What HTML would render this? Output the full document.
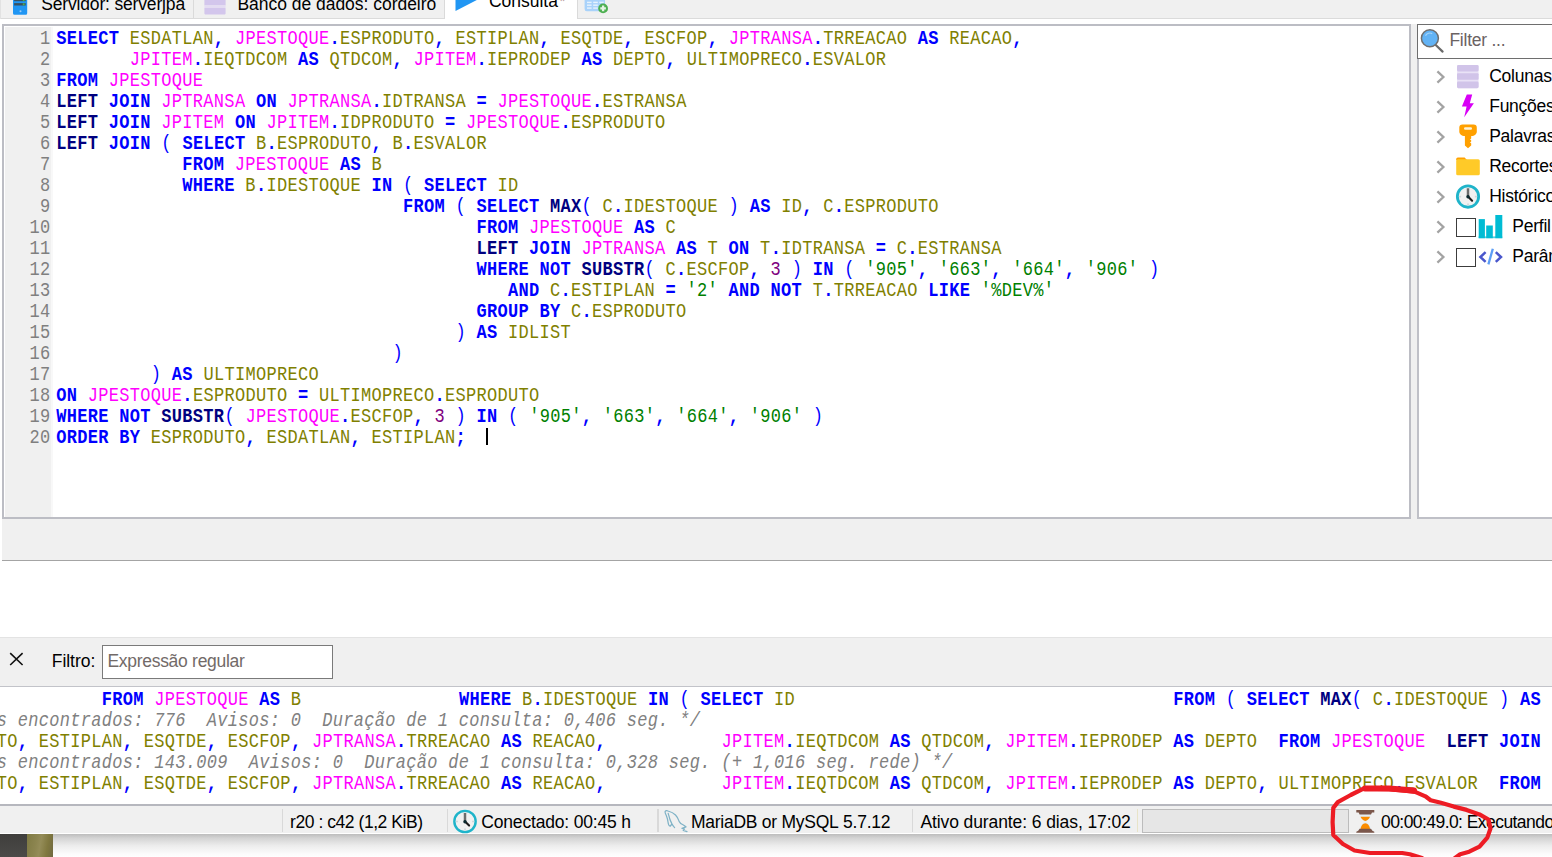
<!DOCTYPE html>
<html lang="pt-BR"><head><meta charset="utf-8"><title>HeidiSQL - Consulta</title>
<style>
html,body{margin:0;padding:0}
body{width:1552px;height:857px;position:relative;overflow:hidden;background:#fff;font-family:"Liberation Sans",sans-serif;font-kerning:none}
.a{position:absolute}
.u{position:absolute;white-space:pre;line-height:22px;font-family:"Liberation Sans",sans-serif}
.code{position:absolute;white-space:pre;font-family:"Liberation Mono",monospace;font-size:17.0px;letter-spacing:0.3008px;line-height:21px;color:#808000}
.code div{height:21px;transform-origin:0 15px;transform:scaleY(1.16)}
.k{color:#0000ff}.f{color:#000080}.t{color:#ff00ff}.i{color:#808000}.y{color:#0000ff}.s{color:#008000}.n{color:#800080}
.m{color:#808080;font-style:italic}
.ln{color:#7f7f7f;text-align:right}
svg{position:absolute;overflow:visible}
</style></head><body>

<div class="a" style="left:0;top:0;width:1552px;height:18px;background:#f0f0f0"></div>
<div class="a" style="left:0;top:18px;width:1552px;height:1.4px;background:#dbdbdb"></div>
<div class="a" style="left:0;top:0;width:1px;height:19px;background:#e2e2e2"></div>
<div class="a" style="left:193px;top:0;width:1px;height:18px;background:#dadada"></div>
<div class="a" style="left:443.6px;top:0;width:134.8px;height:19px;background:#dadada"></div>
<div class="a" style="left:444.8px;top:0;width:132.3px;height:20px;background:#fff"></div>
<svg style="left:12px;top:0" width="17" height="16" viewBox="12 0 17 16"><path d="M13 -4H27.2V13.2a1.5 1.5 0 0 1-1.5 1.5H14.5a1.5 1.5 0 0 1-1.5-1.5Z" fill="#2196f3"/><rect x="14.1" y="-2" width="11.6" height="3.2" fill="#3a5160"/><rect x="14.1" y="3.1" width="11.6" height="2.4" fill="#3a5160"/><rect x="22.8" y="-1" width="1.8" height="2" fill="#4caf50"/><rect x="22.8" y="3.3" width="1.8" height="2" fill="#4caf50"/><circle cx="20.5" cy="11.2" r="1" fill="#9ccdf8"/></svg>
<span class="u" style="left:41.2px;top:-6.67px;font-size:17.5px;letter-spacing:-0.163px;color:#000;">Servidor: serverjpa</span>
<svg style="left:204px;top:0" width="22" height="15" viewBox="204 0 22 15"><rect x="204.4" y="-3" width="21.2" height="8.4" fill="#d3c6ec"/><rect x="204.4" y="7.6" width="21.2" height="6.8" rx="0.8" fill="#d3c6ec"/><rect x="204.4" y="5.4" width="21.2" height="2.2" fill="#e4dcf3"/></svg>
<span class="u" style="left:237.4px;top:-6.87px;font-size:17.5px;letter-spacing:-0.025px;color:#000;">Banco de dados: cordeiro</span>
<svg style="left:455px;top:0" width="24" height="12" viewBox="455 0 24 12"><path d="M455.5 -12V10.9L478 -0.6Z" fill="#2196f3"/></svg>
<span class="u" style="left:488.9px;top:-10.07px;font-size:17.5px;letter-spacing:-0.003px;color:#000;">Consulta</span>
<span class="u" style="left:559.5px;top:-10.20px;font-size:15px;letter-spacing:0.000px;color:#b89a9a;">*</span>
<svg style="left:584px;top:0" width="26" height="15" viewBox="584 0 26 15"><rect x="584.6" y="-4" width="20.4" height="15.3" rx="2.2" fill="#a9d2fa"/><g fill="#e6f2fd"><rect x="587" y="1.7" width="4.6" height="1.4"/><rect x="593.2" y="1.7" width="4.6" height="1.4"/><rect x="599.3" y="1.7" width="4.4" height="1.4"/><rect x="587" y="4.5" width="4.6" height="1.4"/><rect x="593.2" y="4.5" width="4.6" height="1.4"/><rect x="587" y="7.4" width="4.6" height="1.4"/><rect x="593.2" y="7.4" width="4.6" height="1.4"/></g><circle cx="603.1" cy="8.4" r="4.9" fill="#4caf50"/><path d="M600.3 8.4H605.9M603.1 5.6V11.2" stroke="#e4f3e4" stroke-width="2.3"/></svg>
<div class="a" style="left:2px;top:24px;width:1409px;height:495px;box-sizing:border-box;border:2px solid #bcbdc4;background:#fff"></div>
<div class="a" style="left:5px;top:27px;width:45.5px;height:489.5px;background:#f0f0f0"></div>
<div class="a" style="left:50.5px;top:27px;width:2.5px;height:489.5px;background:#f8f8f8"></div>
<div class="code ln" style="left:5px;top:29.00px;width:45.6px"><div>1</div><div>2</div><div>3</div><div>4</div><div>5</div><div>6</div><div>7</div><div>8</div><div>9</div><div>10</div><div>11</div><div>12</div><div>13</div><div>14</div><div>15</div><div>16</div><div>17</div><div>18</div><div>19</div><div>20</div></div>
<div class="code" style="left:56.3px;top:29.00px"><div><b class="k">SELECT</b> <span class="i">ESDATLAN</span><b class="y">,</b> <span class="t">JPESTOQUE</span><b class="y">.</b><span class="i">ESPRODUTO</span><b class="y">,</b> <span class="i">ESTIPLAN</span><b class="y">,</b> <span class="i">ESQTDE</span><b class="y">,</b> <span class="i">ESCFOP</span><b class="y">,</b> <span class="t">JPTRANSA</span><b class="y">.</b><span class="i">TRREACAO</span> <b class="k">AS</b> <span class="i">REACAO</span><b class="y">,</b></div><div>       <span class="t">JPITEM</span><b class="y">.</b><span class="i">IEQTDCOM</span> <b class="k">AS</b> <span class="i">QTDCOM</span><b class="y">,</b> <span class="t">JPITEM</span><b class="y">.</b><span class="i">IEPRODEP</span> <b class="k">AS</b> <span class="i">DEPTO</span><b class="y">,</b> <span class="i">ULTIMOPRECO</span><b class="y">.</b><span class="i">ESVALOR</span></div><div><b class="k">FROM</b> <span class="t">JPESTOQUE</span></div><div><b class="f">LEFT</b> <b class="k">JOIN</b> <span class="t">JPTRANSA</span> <b class="k">ON</b> <span class="t">JPTRANSA</span><b class="y">.</b><span class="i">IDTRANSA</span> <b class="y">=</b> <span class="t">JPESTOQUE</span><b class="y">.</b><span class="i">ESTRANSA</span></div><div><b class="f">LEFT</b> <b class="k">JOIN</b> <span class="t">JPITEM</span> <b class="k">ON</b> <span class="t">JPITEM</span><b class="y">.</b><span class="i">IDPRODUTO</span> <b class="y">=</b> <span class="t">JPESTOQUE</span><b class="y">.</b><span class="i">ESPRODUTO</span></div><div><b class="f">LEFT</b> <b class="k">JOIN</b> <span class="y">(</span> <b class="k">SELECT</b> <span class="i">B</span><b class="y">.</b><span class="i">ESPRODUTO</span><b class="y">,</b> <span class="i">B</span><b class="y">.</b><span class="i">ESVALOR</span></div><div>            <b class="k">FROM</b> <span class="t">JPESTOQUE</span> <b class="k">AS</b> <span class="i">B</span></div><div>            <b class="k">WHERE</b> <span class="i">B</span><b class="y">.</b><span class="i">IDESTOQUE</span> <b class="k">IN</b> <span class="y">(</span> <b class="k">SELECT</b> <span class="i">ID</span></div><div>                                 <b class="k">FROM</b> <span class="y">(</span> <b class="k">SELECT</b> <b class="f">MAX</b><span class="y">(</span> <span class="i">C</span><b class="y">.</b><span class="i">IDESTOQUE</span> <span class="y">)</span> <b class="k">AS</b> <span class="i">ID</span><b class="y">,</b> <span class="i">C</span><b class="y">.</b><span class="i">ESPRODUTO</span></div><div>                                        <b class="k">FROM</b> <span class="t">JPESTOQUE</span> <b class="k">AS</b> <span class="i">C</span></div><div>                                        <b class="f">LEFT</b> <b class="k">JOIN</b> <span class="t">JPTRANSA</span> <b class="k">AS</b> <span class="i">T</span> <b class="k">ON</b> <span class="i">T</span><b class="y">.</b><span class="i">IDTRANSA</span> <b class="y">=</b> <span class="i">C</span><b class="y">.</b><span class="i">ESTRANSA</span></div><div>                                        <b class="k">WHERE</b> <b class="k">NOT</b> <b class="f">SUBSTR</b><span class="y">(</span> <span class="i">C</span><b class="y">.</b><span class="i">ESCFOP</span><b class="y">,</b> <span class="n">3</span> <span class="y">)</span> <b class="k">IN</b> <span class="y">(</span> <span class="s">'905'</span><b class="y">,</b> <span class="s">'663'</span><b class="y">,</b> <span class="s">'664'</span><b class="y">,</b> <span class="s">'906'</span> <span class="y">)</span></div><div>                                           <b class="k">AND</b> <span class="i">C</span><b class="y">.</b><span class="i">ESTIPLAN</span> <b class="y">=</b> <span class="s">'2'</span> <b class="k">AND</b> <b class="k">NOT</b> <span class="i">T</span><b class="y">.</b><span class="i">TRREACAO</span> <b class="k">LIKE</b> <span class="s">'%DEV%'</span></div><div>                                        <b class="k">GROUP</b> <b class="k">BY</b> <span class="i">C</span><b class="y">.</b><span class="i">ESPRODUTO</span></div><div>                                      <span class="y">)</span> <b class="k">AS</b> <span class="i">IDLIST</span></div><div>                                <span class="y">)</span></div><div>         <span class="y">)</span> <b class="k">AS</b> <span class="i">ULTIMOPRECO</span></div><div><b class="k">ON</b> <span class="t">JPESTOQUE</span><b class="y">.</b><span class="i">ESPRODUTO</span> <b class="y">=</b> <span class="i">ULTIMOPRECO</span><b class="y">.</b><span class="i">ESPRODUTO</span></div><div><b class="k">WHERE</b> <b class="k">NOT</b> <b class="f">SUBSTR</b><span class="y">(</span> <span class="t">JPESTOQUE</span><b class="y">.</b><span class="i">ESCFOP</span><b class="y">,</b> <span class="n">3</span> <span class="y">)</span> <b class="k">IN</b> <span class="y">(</span> <span class="s">'905'</span><b class="y">,</b> <span class="s">'663'</span><b class="y">,</b> <span class="s">'664'</span><b class="y">,</b> <span class="s">'906'</span> <span class="y">)</span></div><div><b class="k">ORDER</b> <b class="k">BY</b> <span class="i">ESPRODUTO</span><b class="y">,</b> <span class="i">ESDATLAN</span><b class="y">,</b> <span class="i">ESTIPLAN</span><b class="y">;</b>  </div></div>
<div class="a" style="left:486px;top:427.5px;width:2.2px;height:17px;background:#000"></div>
<div class="a" style="left:1411px;top:24px;width:6.5px;height:495px;background:#f0f0f0"></div>
<div class="a" style="left:1417px;top:24px;width:140px;height:495px;box-sizing:border-box;border:2px solid #bfc0c7;border-right:0;background:#fff"></div>
<div class="a" style="left:1417px;top:24px;width:140px;height:35px;box-sizing:border-box;border:1.8px solid #6e6e6e;border-right:0;background:#fff"></div>
<svg style="left:1418px;top:26px" width="30" height="30" viewBox="1418 26 30 30"><path d="M1436 45.2L1442.6 51.6" stroke="#6a6a6a" stroke-width="2.2" stroke-linecap="round"/><circle cx="1429.9" cy="38.2" r="8.5" fill="#62b3f5" stroke="#6f6f6f" stroke-width="1.5"/><path d="M1425.5 35.6A5 5 0 0 1 1432.2 33.6" stroke="#a7d5fa" stroke-width="1.2" fill="none"/></svg>
<span class="u" style="left:1449.4px;top:28.73px;font-size:17.5px;letter-spacing:-0.243px;color:#6b6363;">Filter ...</span>
<svg style="left:1435px;top:69px" width="12" height="16" viewBox="0 0 12 16"><path d="M2.4 2.3L8.4 8L2.4 13.7" fill="none" stroke="#a3a3a3" stroke-width="2.3"/></svg>
<span class="u" style="left:1489.2px;top:64.68px;font-size:17.5px;letter-spacing:0.000px;color:#000;letter-spacing:-0.25px;">Colunas</span>
<svg style="left:1435px;top:99px" width="12" height="16" viewBox="0 0 12 16"><path d="M2.4 2.3L8.4 8L2.4 13.7" fill="none" stroke="#a3a3a3" stroke-width="2.3"/></svg>
<span class="u" style="left:1489.2px;top:94.68px;font-size:17.5px;letter-spacing:0.000px;color:#000;letter-spacing:-0.25px;">Funções</span>
<svg style="left:1435px;top:129px" width="12" height="16" viewBox="0 0 12 16"><path d="M2.4 2.3L8.4 8L2.4 13.7" fill="none" stroke="#a3a3a3" stroke-width="2.3"/></svg>
<span class="u" style="left:1489.2px;top:124.68px;font-size:17.5px;letter-spacing:0.000px;color:#000;letter-spacing:-0.25px;">Palavras-chave</span>
<svg style="left:1435px;top:159px" width="12" height="16" viewBox="0 0 12 16"><path d="M2.4 2.3L8.4 8L2.4 13.7" fill="none" stroke="#a3a3a3" stroke-width="2.3"/></svg>
<span class="u" style="left:1489.2px;top:154.68px;font-size:17.5px;letter-spacing:0.000px;color:#000;letter-spacing:-0.25px;">Recortes</span>
<svg style="left:1435px;top:189px" width="12" height="16" viewBox="0 0 12 16"><path d="M2.4 2.3L8.4 8L2.4 13.7" fill="none" stroke="#a3a3a3" stroke-width="2.3"/></svg>
<span class="u" style="left:1489.2px;top:184.68px;font-size:17.5px;letter-spacing:0.000px;color:#000;letter-spacing:-0.25px;">Histórico de consultas</span>
<svg style="left:1435px;top:219px" width="12" height="16" viewBox="0 0 12 16"><path d="M2.4 2.3L8.4 8L2.4 13.7" fill="none" stroke="#a3a3a3" stroke-width="2.3"/></svg>
<span class="u" style="left:1512.3px;top:214.68px;font-size:17.5px;letter-spacing:0.000px;color:#000;letter-spacing:-0.25px;">Perfil da consulta</span>
<svg style="left:1435px;top:249px" width="12" height="16" viewBox="0 0 12 16"><path d="M2.4 2.3L8.4 8L2.4 13.7" fill="none" stroke="#a3a3a3" stroke-width="2.3"/></svg>
<span class="u" style="left:1512.3px;top:244.68px;font-size:17.5px;letter-spacing:0.000px;color:#000;letter-spacing:-0.25px;">Parâmetros</span>
<svg style="left:1457px;top:65px" width="22" height="24" viewBox="0 0 22 24"><rect x="0" y="0" width="21.6" height="23.2" rx="1.4" fill="#e9e2f6"/><rect x="0" y="0" width="21.6" height="6.5" rx="1.4" fill="#d1c4e9"/><rect x="0" y="8.3" width="21.6" height="6.5" rx="1" fill="#d1c4e9"/><rect x="0" y="16.6" width="21.6" height="6.6" rx="1.4" fill="#d1c4e9"/></svg>
<svg style="left:1460px;top:94px" width="16" height="24" viewBox="1460 94 16 24"><path d="M1466.8 94.6H1472.2L1469.8 103.2H1473.9L1464.2 117.2L1466.6 106.4H1461.9Z" fill="#d800f6"/></svg>
<svg style="left:1458px;top:123px" width="20" height="26" viewBox="1458 123 20 26"><path d="M1462.5 124.6H1473.6A3.2 3.2 0 0 1 1476.8 127.8V131.4C1476.8 134 1474.5 135.9 1471.5 135.9H1464.6C1461.6 135.9 1459.3 134 1459.3 131.4V127.8A3.2 3.2 0 0 1 1462.5 124.6Z" fill="#ffa000"/><path d="M1464.9 134H1471.2V138.6L1470 139.4L1471.2 140.2V141.6L1470 142.4L1471.2 143.2V145.6L1468 148.3L1464.9 145.6Z" fill="#ffa000"/><rect x="1464" y="127.3" width="8" height="2.4" rx="1.2" fill="#fff3d6"/></svg>
<svg style="left:1456px;top:157px" width="24" height="19" viewBox="1456 157 24 19"><path d="M1456.2 159A1.6 1.6 0 0 1 1457.8 157.4H1464.6L1467 160H1456.2Z" fill="#ffa000"/><rect x="1456.2" y="159.2" width="23.6" height="16.1" rx="1.6" fill="#ffca28"/></svg>
<svg style="left:1455px;top:184px" width="26" height="26" viewBox="1455 184 26 26"><circle cx="1468" cy="196.6" r="10.65" fill="#f1f1f1" stroke="#1fb4ca" stroke-width="2.8"/><path d="M1459.15 196.6h2M1476.85 196.6h-2M1468 205.45v-2" stroke="#cfd6da" stroke-width="1.6"/><path d="M1468 188.25V196.6" stroke="#6c6c6c" stroke-width="2.5"/><path d="M1468 196.6L1472.10 200.70" stroke="#1c1c1c" stroke-width="2.1" stroke-linecap="round"/><circle cx="1468" cy="196.79999999999998" r="1.7" fill="#0c2a30"/></svg>
<div class="a" style="left:1456px;top:217.8px;width:19.6px;height:19.2px;box-sizing:border-box;border:1.9px solid #3c3c3c;background:#fff"></div>
<div class="a" style="left:1456px;top:247.8px;width:19.6px;height:19.2px;box-sizing:border-box;border:1.9px solid #3c3c3c;background:#fff"></div>
<svg style="left:1478px;top:214px" width="26" height="25" viewBox="1478 214 26 25"><rect x="1478.6" y="236.4" width="23.7" height="1.8" fill="#55cfe0"/><rect x="1478.7" y="219.1" width="6.2" height="19.1" fill="#00bcd4"/><rect x="1486.2" y="225.5" width="6.6" height="12.7" fill="#00bcd4"/><rect x="1495.3" y="215" width="7" height="23.2" fill="#00bcd4"/></svg>
<svg style="left:1478px;top:246px" width="26" height="22" viewBox="1478 246 26 22"><path d="M1485.6 252.2L1480.4 257L1485.6 261.8" fill="none" stroke="#4a57cc" stroke-width="2.5"/><path d="M1495.8 252.2L1501 257L1495.8 261.8" fill="none" stroke="#4a57cc" stroke-width="2.5"/><path d="M1492.8 248.8L1488.4 264.4" stroke="#5c9df5" stroke-width="2.3"/></svg>
<div class="a" style="left:2px;top:519px;width:1550px;height:41px;background:#f0f0f0"></div>
<div class="a" style="left:2px;top:559.6px;width:1550px;height:1.5px;background:#a4a4a4"></div>
<div class="a" style="left:0;top:637px;width:1552px;height:49px;background:#f0f0f0;border-top:1.4px solid #e3e3e3;box-sizing:border-box"></div>
<div class="a" style="left:0;top:685.6px;width:1552px;height:1.6px;background:#c2c3c9"></div>
<svg style="left:9px;top:652px" width="15" height="14" viewBox="9 652 15 14"><path d="M10.2 653.2L22.6 665M22.6 653.2L10.2 665" stroke="#111" stroke-width="1.6"/></svg>
<span class="u" style="left:51.8px;top:649.73px;font-size:17.5px;letter-spacing:-0.050px;color:#000;">Filtro:</span>
<div class="a" style="left:102.2px;top:645px;width:231px;height:34px;box-sizing:border-box;border:1.4px solid #7a7a7a;background:#fff"></div>
<span class="u" style="left:107.4px;top:649.63px;font-size:17.5px;letter-spacing:-0.285px;color:#726a68;">Expressão regular</span>
<div class="code" style="left:-3.3px;top:690.00px"><div>          <b class="k">FROM</b> <span class="t">JPESTOQUE</span> <b class="k">AS</b> <span class="i">B</span>               <b class="k">WHERE</b> <span class="i">B</span><b class="y">.</b><span class="i">IDESTOQUE</span> <b class="k">IN</b> <span class="y">(</span> <b class="k">SELECT</b> <span class="i">ID</span>                                    <b class="k">FROM</b> <span class="y">(</span> <b class="k">SELECT</b> <b class="f">MAX</b><span class="y">(</span> <span class="i">C</span><b class="y">.</b><span class="i">IDESTOQUE</span> <span class="y">)</span> <b class="k">AS</b> <span class="i">ID</span><b class="y">,</b> <span class="i">C</span><b class="y">.</b><span class="i">ESPRODUTO</span></div><div class="m">s encontrados: 776  Avisos: 0  Duração de 1 consulta: 0,406 seg. */</div><div><span class="i">TO</span><b class="y">,</b> <span class="i">ESTIPLAN</span><b class="y">,</b> <span class="i">ESQTDE</span><b class="y">,</b> <span class="i">ESCFOP</span><b class="y">,</b> <span class="t">JPTRANSA</span><b class="y">.</b><span class="i">TRREACAO</span> <b class="k">AS</b> <span class="i">REACAO</span><b class="y">,</b>           <span class="t">JPITEM</span><b class="y">.</b><span class="i">IEQTDCOM</span> <b class="k">AS</b> <span class="i">QTDCOM</span><b class="y">,</b> <span class="t">JPITEM</span><b class="y">.</b><span class="i">IEPRODEP</span> <b class="k">AS</b> <span class="i">DEPTO</span>  <b class="k">FROM</b> <span class="t">JPESTOQUE</span>  <b class="f">LEFT</b> <b class="k">JOIN</b> <span class="t">JPTRANSA</span> <b class="k">ON</b></div><div class="m">s encontrados: 143.009  Avisos: 0  Duração de 1 consulta: 0,328 seg. (+ 1,016 seg. rede) */</div><div><span class="i">TO</span><b class="y">,</b> <span class="i">ESTIPLAN</span><b class="y">,</b> <span class="i">ESQTDE</span><b class="y">,</b> <span class="i">ESCFOP</span><b class="y">,</b> <span class="t">JPTRANSA</span><b class="y">.</b><span class="i">TRREACAO</span> <b class="k">AS</b> <span class="i">REACAO</span><b class="y">,</b>           <span class="t">JPITEM</span><b class="y">.</b><span class="i">IEQTDCOM</span> <b class="k">AS</b> <span class="i">QTDCOM</span><b class="y">,</b> <span class="t">JPITEM</span><b class="y">.</b><span class="i">IEPRODEP</span> <b class="k">AS</b> <span class="i">DEPTO</span><b class="y">,</b> <span class="i">ULTIMOPRECO</span><b class="y">.</b><span class="i">ESVALOR</span>  <b class="k">FROM</b> <span class="t">JPESTOQUE</span></div></div>
<div class="a" style="left:0;top:804px;width:1552px;height:2px;background:#b6b7be"></div>
<div class="a" style="left:0;top:806px;width:1552px;height:27.2px;background:#f0f0f0"></div>
<div class="a" style="left:53px;top:833.5px;width:1499px;height:23.5px;background:linear-gradient(#bdbdbd 0,#d4d4d4 18%,#ececec 50%,#fbfbfb 85%,#fff 100%)"></div>
<div class="a" style="left:0;top:833.5px;width:27px;height:24px;background:linear-gradient(#3f3e3c,#4b4a48)"></div>
<div class="a" style="left:26.8px;top:833.5px;width:26.2px;height:24px;background:linear-gradient(100deg,#7f7a43 0,#8c8550 35%,#948c58 50%,#80783f 75%,#6f6840 100%)"></div>
<div class="a" style="left:281.7px;top:808.5px;width:1.4px;height:23px;background:#d9d9d9"></div>
<div class="a" style="left:447.1px;top:808.5px;width:1.4px;height:23px;background:#d9d9d9"></div>
<div class="a" style="left:657.3px;top:808.5px;width:1.4px;height:23px;background:#d9d9d9"></div>
<div class="a" style="left:912.0px;top:808.5px;width:1.4px;height:23px;background:#d9d9d9"></div>
<div class="a" style="left:1136.5px;top:808.5px;width:1.4px;height:23px;background:#e8e4c8"></div>
<span class="u" style="left:290.1px;top:810.93px;font-size:17.5px;letter-spacing:-0.451px;color:#000;">r20 : c42 (1,2 KiB)</span>
<svg style="left:452px;top:809px;overflow:hidden" width="26" height="24.5" viewBox="452 809 26 24.5"><circle cx="465" cy="821.5" r="10.66" fill="#f1f1f1" stroke="#1fb4ca" stroke-width="2.4"/><path d="M455.94 821.5h2M474.06 821.5h-2M465 830.56v-2" stroke="#cfd6da" stroke-width="1.6"/><path d="M465 812.94V821.5" stroke="#6c6c6c" stroke-width="2.5"/><path d="M465 821.5L469.10 825.60" stroke="#1c1c1c" stroke-width="2.1" stroke-linecap="round"/><circle cx="465" cy="821.7" r="1.7" fill="#0c2a30"/></svg>
<span class="u" style="left:481.3px;top:810.93px;font-size:17.5px;letter-spacing:-0.180px;color:#000;">Conectado: 00:45 h</span>
<svg style="left:663px;top:809px" width="26" height="24" viewBox="663 809 26 24"><path d="M665 812C665.5 810.3 667 810.6 668 811C671 811.8 673.5 813 675.5 815C677.5 817 678.3 819.5 679.2 821.5C680 823.5 681.5 824.3 683.4 825L686 826.8L682 828.4L684.5 829L683.2 830.4L687 831.6M665 812C665.3 813.5 665.8 814.5 666.3 815.5C667.3 818 667.8 820 668 822C668.2 824 669 825.8 670.2 826.2C671 825.4 671.6 824.6 671.8 823.6C672.4 825 673.2 826.4 674.6 827.6M668.2 813.4C668.8 815.4 669.3 817.4 669.8 819C670.3 820.6 670.9 821.8 671.5 822.9" fill="none" stroke="#7fb2c6" stroke-width="1.25" stroke-linejoin="round" stroke-linecap="round"/></svg>
<span class="u" style="left:691.0px;top:810.93px;font-size:17.5px;letter-spacing:-0.263px;color:#000;">MariaDB or MySQL 5.7.12</span>
<span class="u" style="left:920.4px;top:810.93px;font-size:17.5px;letter-spacing:-0.097px;color:#000;">Ativo durante: 6 dias, 17:02</span>
<div class="a" style="left:1141.6px;top:809px;width:207.5px;height:24px;box-sizing:border-box;border:1.4px solid #bcbcbc;background:#e6e6e6"></div>
<svg style="left:1355px;top:809px" width="22" height="24" viewBox="1355 809 22 24"><path d="M1359.6 814.2H1371C1371 818 1367 819.5 1366.2 821.4C1367 823.5 1371 825 1371 828.9H1359.6C1359.6 825 1363.6 823.5 1364.4 821.4C1363.6 819.5 1359.6 818 1359.6 814.2Z" fill="#e3edf2"/><path d="M1360.6 816.8H1370C1369.5 819 1367 820.8 1365.3 820.9C1363.6 820.8 1361.1 819 1360.6 816.8Z" fill="#fb8c00"/><path d="M1360.6 829.2C1360.6 826 1363 823.4 1365.3 823.3C1367.6 823.4 1370 826 1370 829.2Z" fill="#fb8c00"/><path d="M1356.3 810H1374.3V812.4H1372L1371 814.5H1359.6L1358.6 812.4H1356.3Z" fill="#7b574b"/><path d="M1359.6 828.7H1371L1372.4 830.8L1374.3 831.8V832.7H1356.3V831.8L1358.2 830.8Z" fill="#7b574b"/></svg>
<span class="u" style="left:1381.0px;top:810.93px;font-size:17.5px;letter-spacing:0.000px;color:#000;letter-spacing:-0.56px;">00:00:49.0: Executando consulta...</span>
<svg style="left:0;top:0" width="1552" height="857" viewBox="0 0 1552 857"><path d="M1455 858L1460.2 854.3L1469.2 851.7L1479.5 846.6L1487.3 837.6L1490.5 828.5L1488.5 819.5L1479.5 814.4L1466.6 809.9L1453.8 806.6L1440.9 802.8L1430.6 800.2L1425.4 796.3L1415.1 791.8L1402.2 790.5L1389.3 789.2L1363.5 788.6L1350.7 795L1337.8 802.1L1333.3 807.9L1332.6 822.1L1333.3 835L1342.9 844L1354.5 850.5L1370 853L1402.2 853L1409.9 854.3L1422 858" fill="none" stroke="#ed1c24" stroke-width="4.2" stroke-linecap="round" stroke-linejoin="round"/><path d="M1365 788.4L1389 788.6L1414 790.6" fill="none" stroke="#ed1c24" stroke-width="6" stroke-linecap="round" stroke-linejoin="round"/></svg>
</body></html>
